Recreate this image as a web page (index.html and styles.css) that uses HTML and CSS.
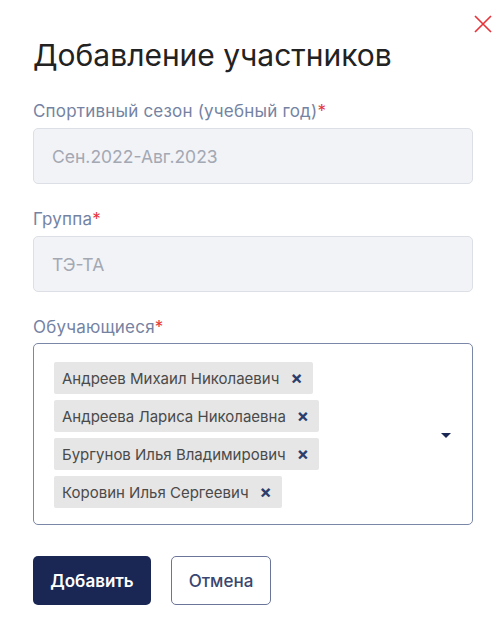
FILE: index.html
```html
<!DOCTYPE html>
<html lang="ru">
<head>
<meta charset="utf-8">
<title>Добавление участников</title>
<link rel="stylesheet" href="styles.css">
</head>
<body>
<div class="modal">
  <button class="close" aria-label="Закрыть">
    <svg width="18" height="18" viewBox="0 0 18 18"><path d="M1 1L17 17M17 1L1 17" stroke="#e5353b" stroke-width="1.7" fill="none"/></svg>
  </button>
  <h1 class="title">Добавление участников</h1>

  <div class="field">
    <label class="label">Спортивный сезон (учебный год)<span class="req">*</span></label>
    <div class="input disabled">Сен.2022-Авг.2023</div>
  </div>

  <div class="field">
    <label class="label">Группа<span class="req">*</span></label>
    <div class="input disabled">ТЭ-ТА</div>
  </div>

  <div class="field">
    <label class="label">Обучающиеся<span class="req">*</span></label>
    <div class="multi">
      <div class="chips">
        <span class="chip">Андреев Михаил Николаевич<span class="chip-x">×</span></span>
        <span class="chip">Андреева Лариса Николаевна<span class="chip-x">×</span></span>
        <span class="chip">Бургунов Илья Владимирович<span class="chip-x">×</span></span>
        <span class="chip">Коровин Илья Сергеевич<span class="chip-x">×</span></span>
      </div>
      <span class="caret"></span>
    </div>
  </div>

  <div class="actions">
    <button class="btn primary">Добавить</button>
    <button class="btn secondary">Отмена</button>
  </div>
</div>
</body>
</html>
```

FILE: styles.css
```css
* { box-sizing: border-box; }
html, body { margin: 0; padding: 0; background: #fff; }
body {
  font-family: Inter, "Noto Sans", "Liberation Sans", sans-serif;
  color: #222;
  width: 504px;
}
.modal {
  position: relative;
  padding: 37px 31px 0 33px;
}
.close {
  position: absolute;
  top: 15px;
  right: 12px;
  width: 18px;
  height: 18px;
  padding: 0;
  border: 0;
  background: none;
  display: block;
}
.close svg { display: block; }
.title {
  margin: 0 0 28px;
  font-size: 30px;
  line-height: 36px;
  font-weight: 400;
  color: #222;
  letter-spacing: 0;
}
.field { margin-bottom: 25px; }
.label {
  display: block;
  font-size: 17px;
  line-height: 20px;
  letter-spacing: 0.2px;
  color: #7583a3;
  margin-bottom: 7px;
}
.req { color: #e5353b; }
.input {
  height: 56px;
  border: 1px solid #dcdfe5;
  border-radius: 5px;
  display: flex;
  align-items: center;
  padding: 0 18px;
  font-size: 17.5px;
  color: #a3a8b3;
}
.input.disabled { background: #f2f3f7; }
.multi {
  border: 1px solid #7b87a6;
  border-radius: 5px;
  padding: 18px 20px 16px 20px;
  display: flex;
  align-items: center;
  margin-top: -1px;
}
.chips {
  flex: 1;
  display: flex;
  flex-direction: column;
  align-items: flex-start;
  gap: 6px;
}
.chip {
  display: inline-flex;
  align-items: center;
  height: 32px;
  padding: 0 10px 0 8px;
  background: #e6e6e6;
  border-radius: 2px;
  font-size: 15px;
  color: #4a4a4a;
}
.chip-x {
  margin-left: 11px;
  font-size: 18px;
  font-weight: 700;
  color: #2d3d6b;
  line-height: 1;
}
.caret {
  width: 0;
  height: 0;
  border-left: 5px solid transparent;
  border-right: 5px solid transparent;
  border-top: 5px solid #1a2654;
  margin-right: 1px;
}
.actions {
  display: flex;
  gap: 20px;
  margin-top: 31px;
}
.btn {
  height: 49px;
  border-radius: 5px;
  font-family: inherit;
  font-size: 17px;
  padding: 0;
}
.primary {
  width: 118px;
  background: #1a2654;
  color: #fff;
  border: 0;
  font-weight: 600;
}
.secondary {
  width: 100px;
  background: #fff;
  color: #3a4670;
  border: 1px solid #6b7599;
  font-weight: 500;
}
```
